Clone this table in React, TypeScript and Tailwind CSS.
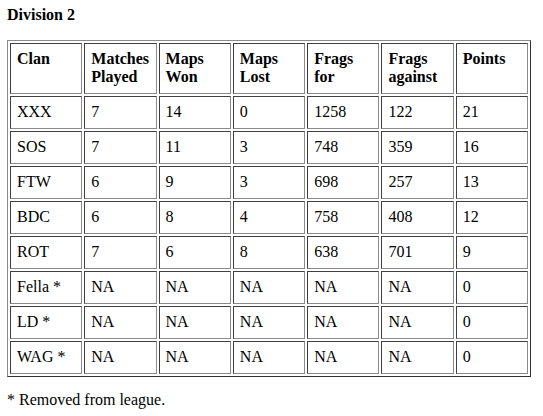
const headers = [
  ["Clan"],
  ["Matches", "Played"],
  ["Maps", "Won"],
  ["Maps", "Lost"],
  ["Frags", "for"],
  ["Frags", "against"],
  ["Points"],
];

const rows = [
  ["XXX", "7", "14", "0", "1258", "122", "21"],
  ["SOS", "7", "11", "3", "748", "359", "16"],
  ["FTW", "6", "9", "3", "698", "257", "13"],
  ["BDC", "6", "8", "4", "758", "408", "12"],
  ["ROT", "7", "6", "8", "638", "701", "9"],
  ["Fella *", "NA", "NA", "NA", "NA", "NA", "0"],
  ["LD *", "NA", "NA", "NA", "NA", "NA", "0"],
  ["WAG *", "NA", "NA", "NA", "NA", "NA", "0"],
];

const cell =
  "border border-t-[#404040] border-l-[#404040] border-r-[#8a8a8a] border-b-[#8a8a8a] pl-[6px] pr-[6px] pt-[6px] pb-[7px] align-top text-left";

export default function App() {
  return (
    <div className="min-h-[416px] w-[543px] bg-white font-['Liberation_Serif',serif] text-[16px] leading-[18px] text-black">
      <div className="pl-[7px] pt-[6px] font-bold">Division 2</div>

      <table className="ml-[7px] mt-4 w-[524px] table-fixed border-separate border-spacing-[2px] border border-t-[#8a8a8a] border-l-[#8a8a8a] border-r-[#333333] border-b-[#333333]">
        <thead>
          <tr>
            {headers.map((h) => (
              <th key={h.join(" ")} className={`${cell} font-bold`}>
                {h.map((line, i) => (
                  <div key={i}>{line}</div>
                ))}
                {h.length === 1 ? <div>&nbsp;</div> : null}
              </th>
            ))}
          </tr>
        </thead>
        <tbody>
          {rows.map((r) => (
            <tr key={r[0]}>
              {r.map((v, i) => (
                <td key={i} className={cell}>
                  {v}
                </td>
              ))}
            </tr>
          ))}
        </tbody>
      </table>

      <p className="mt-[14px] pl-[7px]">* Removed from league.</p>
    </div>
  );
}
